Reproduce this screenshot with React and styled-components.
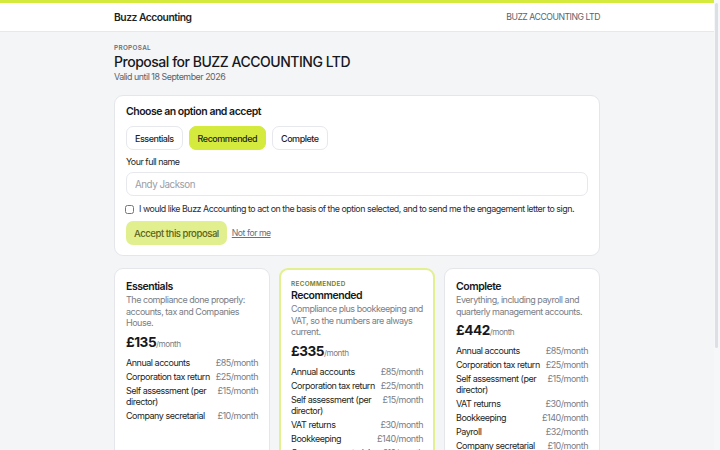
import React from "react";
import styled, { createGlobalStyle } from "styled-components";

const Global = createGlobalStyle`
  html, body { margin: 0; padding: 0; height: 100%; overflow: hidden; }
  body {
    background: #f4f5f7;
    font-family: Inter, "Noto Sans", sans-serif;
    color: #16181d;
    letter-spacing: -0.03em;
  }
`;

const Viewport = styled.div`
  height: 100vh;
  overflow-y: auto;
  padding-right: 6px;
  box-sizing: border-box;
`;

const ScrollTrack = styled.div`
  position: fixed;
  top: 0;
  right: 0;
  bottom: 0;
  width: 6px;
  background: #f6f7f9;
`;

const ScrollThumb = styled.div`
  margin: 3px 0 0 1px;
  width: 3px;
  height: 345px;
  border-radius: 2px;
  background: #dcdfe4;
`;

const TopBar = styled.div`
  height: 3px;
  background: #d4ea3c;
`;

const Header = styled.header`
  background: #fff;
  border-bottom: 1px solid #e6e8ec;
  height: 28px;
  display: flex;
  justify-content: center;
`;

const HeaderInner = styled.div`
  width: 486px;
  display: flex;
  align-items: center;
  justify-content: space-between;
`;

const Brand = styled.div`
  font-size: 10.3px;
  font-weight: 600;
  color: #1d1f24;
`;

const Client = styled.div`
  font-size: 8.7px;
  color: #5d626b;
`;

const Main = styled.main`
  width: 486px;
  margin: 0 auto;
  padding: 11px 0 40px;
`;

const Eyebrow = styled.div`
  font-size: 6.4px;
  font-weight: 600;
  letter-spacing: 0.3px;
  text-transform: uppercase;
  color: ${(p) => p.$color || "#6b6f78"};
  line-height: ${(p) => p.$lh || "10px"};
`;

const Title = styled.h1`
  margin: 0;
  font-size: 14px;
  font-weight: 500;
  line-height: 18px;
  color: #16181d;
`;

const Valid = styled.div`
  font-size: 8.9px;
  color: #5d626b;
  line-height: 12px;
`;

const Card = styled.section`
  margin-top: 12px;
  background: #fff;
  border: 1px solid #e4e6ea;
  border-radius: 9px;
  padding: 9px 11px 10px;
`;

const CardTitle = styled.h2`
  margin: 0;
  font-size: 10.5px;
  font-weight: 600;
  line-height: 14px;
`;

const Tabs = styled.div`
  display: flex;
  gap: 6px;
  margin-top: 7px;
`;

const Tab = styled.button`
  height: 24px;
  padding: 0 8px;
  border-radius: 7px;
  border: 1px solid ${(p) => (p.$active ? "#d4ea3c" : "#e6e8ec")};
  background: ${(p) => (p.$active ? "#d4ea3c" : "#fff")};
  font-family: inherit;
  letter-spacing: inherit;
  font-size: 9px;
  font-weight: 500;
  color: #1d1f24;
`;

const Label = styled.div`
  font-size: 8.9px;
  margin-top: 6px;
  line-height: 12px;
  color: #1d1f24;
`;

const Input = styled.input`
  display: block;
  box-sizing: border-box;
  width: 100%;
  height: 24px;
  margin-top: 4px;
  border: 1px solid #e6e8ec;
  border-radius: 7px;
  padding: 0 8px;
  font-family: inherit;
  letter-spacing: inherit;
  font-size: 9.8px;
  &::placeholder { color: #9a9ea6; }
`;

const CheckRow = styled.label`
  display: flex;
  align-items: center;
  gap: 5px;
  margin-top: 7px;
  margin-left: -1px;
  font-size: 8.9px;
  color: #2a2d33;
  line-height: 12px;
  white-space: nowrap;
`;

const Box = styled.input`
  margin: 0;
  width: 9px;
  height: 9px;
`;

const Actions = styled.div`
  display: flex;
  align-items: center;
  gap: 5px;
  margin-top: 6px;
`;

const Accept = styled.button`
  height: 24px;
  padding: 0 8px;
  border: none;
  border-radius: 7px;
  background: #e2ef8e;
  color: #5c6320;
  font-family: inherit;
  letter-spacing: inherit;
  font-size: 9.6px;
  font-weight: 500;
`;

const Link = styled.a`
  font-size: 8.7px;
  color: #6b6f78;
  text-decoration: underline;
`;

const Plans = styled.div`
  display: grid;
  grid-template-columns: repeat(3, 1fr);
  gap: 9px;
  margin-top: 12px;
  align-items: start;
`;

const Plan = styled.div`
  background: #fff;
  border: ${(p) => (p.$featured ? "2px solid #e3f08f" : "1px solid #e4e6ea")};
  border-radius: 9px;
  padding: ${(p) => (p.$featured ? "10px 10px 12px" : "11px 11px 13px")};
  min-height: 200px;
`;

const PlanName = styled.h3`
  margin: ${(p) => (p.$afterEyebrow ? "1px 0 0" : "0")};
  font-size: 10.5px;
  font-weight: 600;
  line-height: 14px;
`;

const PlanDesc = styled.p`
  margin: 0;
  font-size: 9px;
  line-height: 11.5px;
  color: #7a7e86;
`;

const Price = styled.div`
  margin-top: 5px;
  display: flex;
  align-items: baseline;
  line-height: 16px;
`;

const Amount = styled.span`
  font-size: 13.6px;
  font-weight: 700;
`;

const Per = styled.span`
  font-size: 8.2px;
  color: #7a7e86;
`;

const Items = styled.div`
  margin-top: 5px;
  display: flex;
  flex-direction: column;
  gap: 3px;
`;

const Item = styled.div`
  display: flex;
  justify-content: space-between;
  gap: 6px;
  font-size: 9px;
  line-height: 11px;
`;

const ItemName = styled.span`
  color: #1d1f24;
`;

const ItemPrice = styled.span`
  color: #7a7e86;
  white-space: nowrap;
`;

const plans = [
  {
    name: "Essentials",
    desc: "The compliance done properly: accounts, tax and Companies House.",
    price: "£135",
    items: [
      ["Annual accounts", "£85/month"],
      ["Corporation tax return", "£25/month"],
      ["Self assessment (per director)", "£15/month"],
      ["Company secretarial", "£10/month"],
    ],
  },
  {
    name: "Recommended",
    featured: true,
    desc: "Compliance plus bookkeeping and VAT, so the numbers are always current.",
    price: "£335",
    items: [
      ["Annual accounts", "£85/month"],
      ["Corporation tax return", "£25/month"],
      ["Self assessment (per director)", "£15/month"],
      ["VAT returns", "£30/month"],
      ["Bookkeeping", "£140/month"],
      ["Company secretarial", "£10/month"],
    ],
  },
  {
    name: "Complete",
    desc: "Everything, including payroll and quarterly management accounts.",
    price: "£442",
    items: [
      ["Annual accounts", "£85/month"],
      ["Corporation tax return", "£25/month"],
      ["Self assessment (per director)", "£15/month"],
      ["VAT returns", "£30/month"],
      ["Bookkeeping", "£140/month"],
      ["Payroll", "£32/month"],
      ["Company secretarial", "£10/month"],
      ["Management accounts", "£50/month"],
    ],
  },
];

export default function App() {
  return (
    <Viewport>
      <Global />
      <TopBar />
      <Header>
        <HeaderInner>
          <Brand>Buzz Accounting</Brand>
          <Client>BUZZ ACCOUNTING LTD</Client>
        </HeaderInner>
      </Header>
      <Main>
        <Eyebrow>Proposal</Eyebrow>
        <Title>Proposal for BUZZ ACCOUNTING LTD</Title>
        <Valid>Valid until 18 September 2026</Valid>
        <Card>
          <CardTitle>Choose an option and accept</CardTitle>
          <Tabs>
            <Tab>Essentials</Tab>
            <Tab $active>Recommended</Tab>
            <Tab>Complete</Tab>
          </Tabs>
          <Label>Your full name</Label>
          <Input placeholder="Andy Jackson" />
          <CheckRow>
            <Box type="checkbox" />
            I would like Buzz Accounting to act on the basis of the option selected, and to send me the engagement letter to sign.
          </CheckRow>
          <Actions>
            <Accept>Accept this proposal</Accept>
            <Link href="#">Not for me</Link>
          </Actions>
        </Card>
        <Plans>
          {plans.map((p) => (
            <Plan key={p.name} $featured={p.featured}>
              {p.featured && (
                <Eyebrow $color="#6f7d1f" $lh="8px">
                  Recommended
                </Eyebrow>
              )}
              <PlanName $afterEyebrow={p.featured}>{p.name}</PlanName>
              <PlanDesc>{p.desc}</PlanDesc>
              <Price>
                <Amount>{p.price}</Amount>
                <Per>/month</Per>
              </Price>
              <Items>
                {p.items.map(([n, v]) => (
                  <Item key={n}>
                    <ItemName>{n}</ItemName>
                    <ItemPrice>{v}</ItemPrice>
                  </Item>
                ))}
              </Items>
            </Plan>
          ))}
        </Plans>
      </Main>
      <ScrollTrack>
        <ScrollThumb />
      </ScrollTrack>
    </Viewport>
  );
}
